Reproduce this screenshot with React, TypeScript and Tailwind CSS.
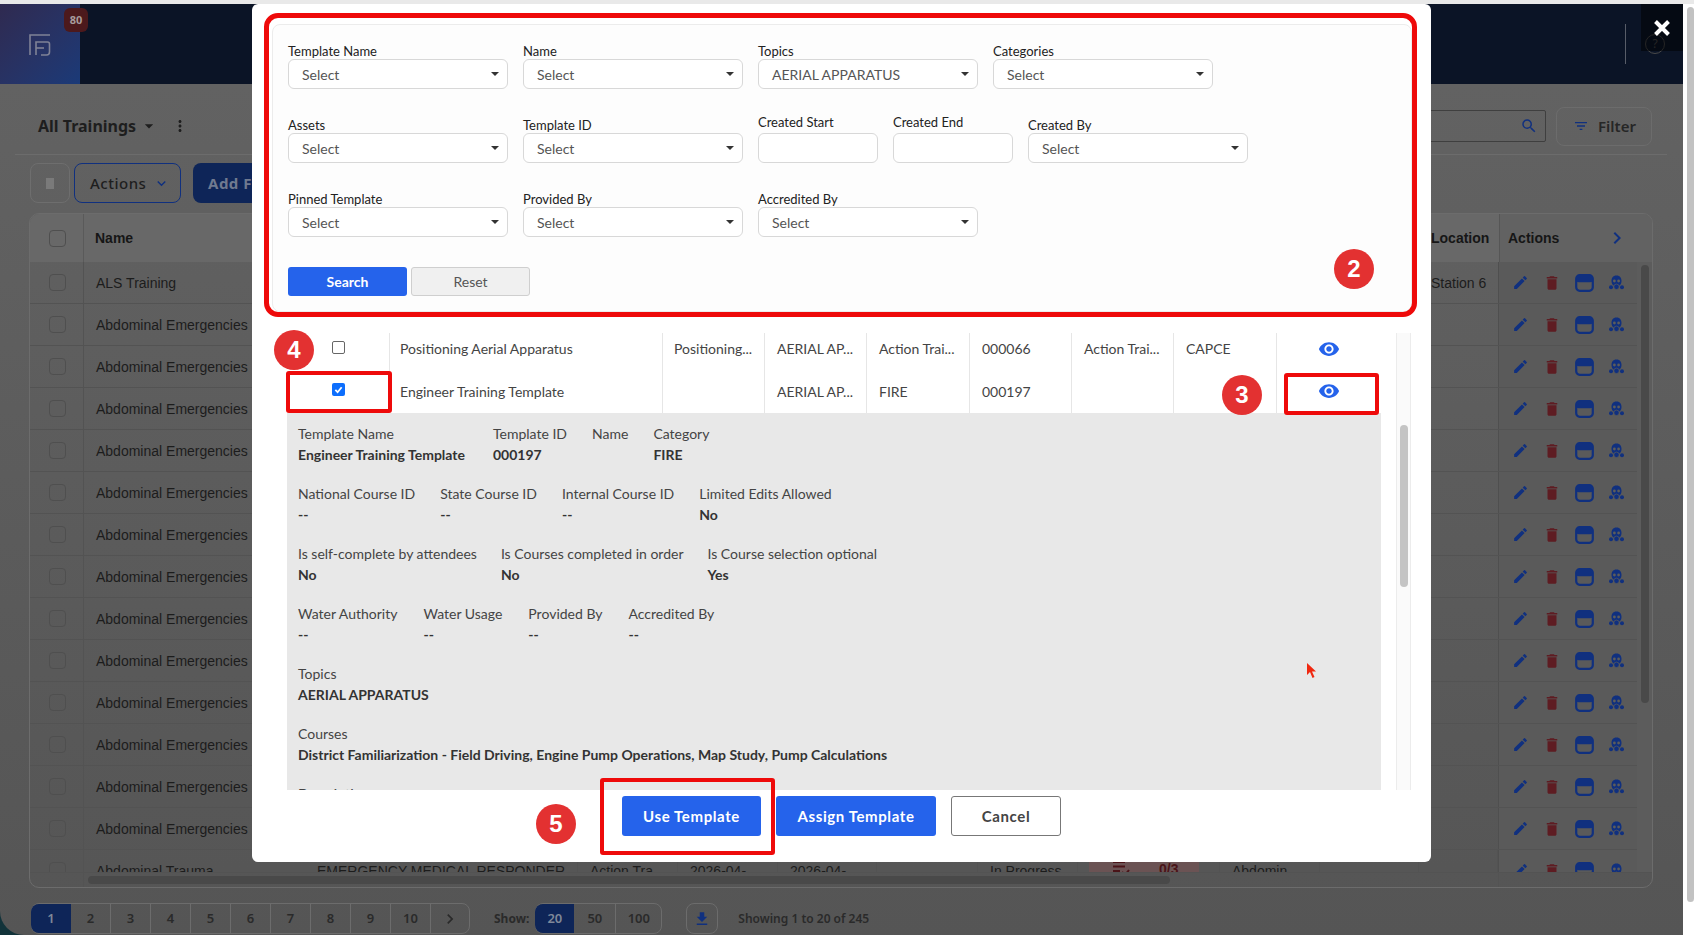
import React from "react";
import { MdVisibility, MdEdit, MdDelete, MdSearch, MdFilterList, MdDownload, MdArrowDropDown, MdMoreVert, MdKeyboardArrowDown, MdChevronRight } from "react-icons/md";

const bgCols = [221, 273, 100, 100, 99, 101, 100, 142, 100, 99, 79];

function WindowIcon() {
  return (
    <svg width="19" height="18" viewBox="0 0 19 18" className="shrink-0">
      <rect x="1.2" y="1.2" width="16.6" height="15.6" rx="3.5" fill="none" stroke="#10307f" strokeWidth="2.2" />
      <rect x="1.2" y="1.2" width="16.6" height="7" rx="2.5" fill="#10307f" />
    </svg>
  );
}

function MaskIcon() {
  return (
    <svg width="15" height="15" viewBox="0 0 15 15" className="shrink-0">
      <path d="M7.5 0.5C3.8 0.5 2.5 3 2.5 6c0 2 .8 3.6 2 4.6h6c1.2-1 2-2.6 2-4.6 0-3-1.3-5.5-5-5.5z" fill="#10307f" />
      <circle cx="5.4" cy="6" r="1.4" fill="#5c5c5c" />
      <circle cx="9.6" cy="6" r="1.4" fill="#5c5c5c" />
      <circle cx="2" cy="12.3" r="2" fill="#10307f" />
      <circle cx="13" cy="12.3" r="2" fill="#10307f" />
      <circle cx="7.5" cy="11.8" r="2.7" fill="#10307f" stroke="#5c5c5c" strokeWidth="0.7" />
    </svg>
  );
}

function BgCheck() {
  return <span className="w-[17px] h-[17px] ml-[1px] rounded-[4px] border border-[#4f4f4f] block" />;
}

function BgRow({ name, location, trauma }: { name: string; location?: string; trauma?: boolean }) {
  return (
    <div className="flex h-[42px] shrink-0 border-b border-[#535353] font-['Liberation_Sans',sans-serif] text-[14px] text-[#1c1c1c]">
      <div className="w-[54px] shrink-0 flex items-center justify-center border-r border-[#535353]">
        <BgCheck />
      </div>
      {bgCols.map((w, i) => {
        let text = "";
        if (i === 0) text = name;
        if (trauma) {
          text = ["Abdominal Trauma", "EMERGENCY MEDICAL RESPONDER", "Action Tra", "2026-04-", "2026-04-", "", "In Progress", "", "Abdomin", "", ""][i];
        }
        if (i === 10 && location) text = location;
        return (
          <div key={i} style={{ width: w }} className={"shrink-0 flex items-center pt-[1px] px-[12px] overflow-hidden whitespace-nowrap " + (trauma && i > 0 ? "border-r border-[#535353]" : "")}>
            {trauma && i === 7 ? (
              <div className="w-[110px] h-full ml-[-1px] bg-[#6b5354] flex items-start pt-[8px] pl-[23px] gap-[29px] text-[#4a1418] font-bold">
                <svg width="18" height="18" viewBox="0 0 18 18" fill="none" stroke="#4a1418" strokeWidth="2" className="shrink-0">
                  <path d="M1 3h12M1 7.5h12M1 12h7M10 13l3 3 4-5" />
                </svg>
                <span className="leading-[20px]">0/3</span>
              </div>
            ) : (
              text
            )}
          </div>
        );
      })}
      <div className="w-[140px] shrink-0 flex items-center pl-[13px] bg-[#5a5a5a] border-l border-[#4f4f4f] text-[#10307f]">
        <MdEdit size={17} className="shrink-0" />
        <MdDelete size={18} className="shrink-0 ml-[14px] text-[#5e1c22]" />
        <span className="ml-[14px]"><WindowIcon /></span>
        <span className="ml-[15px]"><MaskIcon /></span>
      </div>
    </div>
  );
}

function Background() {
  const pages = ["1", "2", "3", "4", "5", "6", "7", "8", "9", "10"];
  return (
    <div className="h-[935px] flex flex-col bg-[#e8e8e8]">
      <div className="h-[4px] shrink-0 bg-[#e9e9e9]" />
      <div className="flex flex-1 min-h-0">
        <div className="w-[1683px] flex flex-col bg-[#12333a]">
          <header className="h-[80px] shrink-0 bg-[#0b1426] flex">
            <div className="w-[80px] bg-gradient-to-br from-[#2f2a50] to-[#1a3a78] flex items-center justify-center relative">
              <svg width="22" height="22" viewBox="0 0 22 22" fill="none" stroke="#7f8296" strokeWidth="1.6" className="mt-[1px] mr-[1px]">
                <path d="M21 1H1V21" />
                <path d="M7 21V8H18.5a2 2 0 0 1 2 2V18a3 3 0 0 1-3 3H12" />
                <path d="M7 14H15" />
              </svg>
              <span className="absolute left-[64px] top-[4px] w-[24px] h-[24px] rounded-[6px] bg-[#4c191c] flex items-center justify-center text-[11px] font-bold text-[#a89c9c] font-['Noto_Sans',sans-serif]">80</span>
            </div>
            <div className="flex-1" />
            <div className="w-[1px] h-[40px] mt-[20px] bg-[#585d68]" />
            <div className="w-[57px] flex justify-center pt-[30px] pl-[1px]">
              <span className="w-[20px] h-[20px] rounded-full border border-[#4a4a4a] flex items-center justify-center text-[12px] text-[#4a4a4a] font-['Noto_Sans',sans-serif]">?</span>
            </div>
          </header>
          <main className="flex-1 min-h-0 rounded-bl-[24px] bg-gradient-to-b from-[#626262] to-[#555555] flex flex-col overflow-hidden pl-[15px] pr-[16px] font-['Noto_Sans',sans-serif]">
            <div className="h-[71px] shrink-0 border-b border-[#6c6c6c] flex items-center">
              <span className="ml-[23px] mt-[13px] text-[16px] font-bold text-[#1e1e1e]">All Trainings</span>
              <MdArrowDropDown size={20} className="ml-[3px] mt-[13px] text-[#1e1e1e]" />
              <MdMoreVert size={18} className="ml-[12px] mt-[13px] text-[#1e1e1e]" />
              <div className="flex-1" />
              <div className="w-[500px] h-[32px] mt-[14px] mr-[10px] border border-[#3f3f3f] rounded-[2px] flex items-center justify-end pr-[7px]">
                <MdSearch size={18} className="text-[#10307f]" />
              </div>
              <div className="w-[96px] h-[39px] mr-[15px] mt-[14px] border border-[#6c6c6c] rounded-[8px] flex items-center pl-[16px] gap-[9px] text-[15px] font-semibold text-[#262626]">
                <MdFilterList size={16} className="text-[#10307f]" />
                Filter
              </div>
            </div>
            <div className="flex shrink-0 mt-[8px] ml-[15px] h-[40px] items-center">
              <div className="w-[40px] h-[40px] rounded-[8px] border border-[#6e6e6e] flex items-center justify-center">
                <div className="w-[8px] h-[11px] bg-[#7a7a7a]" />
              </div>
              <div className="w-[107px] h-[40px] ml-[4px] rounded-[8px] border border-[#10307f] flex items-center pl-[15px] gap-[7px] text-[15px] font-medium tracking-[0.5px] text-[#1e1e1e]">
                Actions
                <MdKeyboardArrowDown size={17} className="text-[#10307f]" />
              </div>
              <div className="w-[120px] h-[40px] ml-[12px] rounded-[8px] bg-[#0e2558] flex items-center pl-[15px] text-[15px] font-bold tracking-[0.5px] text-[#707a90]">Add F</div>
            </div>
            <div className="ml-[14px] mt-[10px] w-[1624px] h-[675px] shrink-0 border border-[#6c6c6c] rounded-[10px] flex flex-col overflow-hidden">
              <div className="flex h-[48px] shrink-0 bg-[#686868] font-['Liberation_Sans',sans-serif] font-bold text-[14px] text-[#161616]">
                <div className="w-[54px] flex items-center justify-center border-r border-[#5a5a5a]"><BgCheck /></div>
                <div className="w-[1336px] pl-[11px] flex items-center">Name</div>
                <div className="w-[79px] pl-[11px] flex items-center">Location</div>
                <div className="flex-1 flex items-center pl-[8px] bg-[#626262] border-l border-[#565656]">
                  Actions
                  <MdChevronRight size={24} className="ml-[46px] text-[#10307f]" />
                </div>
              </div>
              <div className="flex flex-1 min-h-0">
                <div className="w-[1608px] flex flex-col overflow-hidden">
                  <BgRow name="ALS Training" location="Station 6" />
                  {Array.from({ length: 13 }).map((_, i) => (
                    <BgRow key={i} name="Abdominal Emergencies" />
                  ))}
                  <BgRow name="Abdominal Trauma" trauma />
                </div>
                <div className="flex-1 bg-[#5c5c5c] pt-[3px] pl-[4px] pr-[3px]">
                  <div className="w-[8px] h-[438px] rounded-full bg-[#494949]" />
                </div>
              </div>
              <div className="h-[15px] shrink-0 flex border-t border-[#535353]">
                <div className="w-[54px] border-r border-[#535353]" />
                <div className="w-[1414px] pt-[3px]">
                  <div className="ml-[4px] w-[1082px] h-[8px] rounded-full bg-[#494949]" />
                </div>
                <div className="flex-1 border-l border-[#535353]" />
              </div>
            </div>
            <div className="flex mt-[15px] ml-[16px] h-[31px] items-center text-[13px] font-semibold text-[#2a2a2a]">
              <div className="flex h-full rounded-[8px] border border-[#6c6c6c]">
                {pages.map((p, i) => (
                  <span key={p} className={i === 0 ? "w-[40px] -ml-[1px] rounded-l-[8px] bg-[#0e2558] text-[#7f8899] flex items-center justify-center" : "w-[40px] border-r border-[#6c6c6c] flex items-center justify-center"}>{p}</span>
                ))}
                <span className="w-[38px] flex items-center justify-center"><MdChevronRight size={20} /></span>
              </div>
              <span className="ml-[24px] text-[12px] font-bold">Show:</span>
              <div className="flex h-full ml-[6px] rounded-[8px] border border-[#6c6c6c]">
                <span className="w-[39px] rounded-l-[8px] -ml-[1px] bg-[#0e2558] text-[#7f8899] flex items-center justify-center">20</span>
                <span className="w-[42px] border-r border-[#6c6c6c] flex items-center justify-center">50</span>
                <span className="w-[45px] flex items-center justify-center">100</span>
              </div>
              <div className="w-[32px] h-full ml-[24px] rounded-[8px] border border-[#6c6c6c] flex items-center justify-center">
                <MdDownload size={18} className="text-[#10307f]" />
              </div>
              <span className="ml-[20px] text-[12px]">Showing 1 to 20 of 245</span>
            </div>
          </main>
        </div>
        <div className="flex-1 bg-white pl-[4px] pt-[3px]">
          <div className="w-[7px] h-[895px] rounded-full bg-[#c2c2c2]" />
        </div>
      </div>
    </div>
  );
}

function Label({ children, up }: { children: React.ReactNode; up?: boolean }) {
  return <div className={up ? "h-[17px] mb-[3px] text-[13px] leading-[18px] text-[#222]" : "h-[17px] text-[13px] leading-[18px] text-[#222]"}>{children}</div>;
}

function SelectBox({ label, value = "Select", up }: { label: string; value?: string; up?: boolean }) {
  return (
    <div className="shrink-0">
      <Label up={up}>{label}</Label>
      <div className="w-[220px] h-[30px] rounded-[6px] border border-[#d8d8d8] bg-white flex items-center justify-between pl-[13px] pr-[8px] text-[14px] text-[#555]">
        {value}
        <span className="w-0 h-0 border-l-[4px] border-r-[4px] border-t-[4.5px] border-l-transparent border-r-transparent border-t-[#333]" />
      </div>
    </div>
  );
}

function DateBox({ label }: { label: string }) {
  return (
    <div className="shrink-0">
      <Label up>{label}</Label>
      <div className="w-[120px] h-[30px] rounded-[6px] border border-[#d8d8d8] bg-white" />
    </div>
  );
}

function Detail({ label, value, wide }: { label: string; value: string; wide?: boolean }) {
  return (
    <div className={wide ? "shrink-0 w-[170px]" : "shrink-0"}>
      <div className="h-[21px] leading-[21px] text-[14px] text-[#444]">{label}</div>
      <div className="h-[21px] leading-[21px] text-[14px] font-bold text-[#333] whitespace-nowrap">{value}</div>
    </div>
  );
}

function DetailRow({ items, gap = "gap-[25px]", wideFirst }: { items: [string, string][]; gap?: string; wideFirst?: boolean }) {
  return (
    <div className={"flex h-[60px] shrink-0 " + gap}>
      {items.map(([l, v], i) => <Detail key={l} label={l} value={v} wide={wideFirst && i === 0} />)}
    </div>
  );
}

function TRow({ cells, checked, clip }: { cells: string[]; checked?: boolean; clip?: boolean }) {
  const widths = [273, 102, 102, 103, 102, 102, 103, 104];
  return (
    <div className={clip ? "flex h-[38px] shrink-0 text-[14px] text-[#444]" : "flex h-[42px] shrink-0 text-[14px] text-[#444]"}>
      <div className="w-[103px] shrink-0 border-r border-[#e6e6e6] flex justify-center pt-[2px] pl-[1px]">
        {checked ? (
          <span className="w-[13px] h-[13px] mt-[10px] rounded-[2px] bg-[#0d6efd] flex items-center justify-center">
            <svg width="9" height="9" viewBox="0 0 10 10" fill="none" stroke="#fff" strokeWidth="2"><path d="M1.5 5.5 4 8 8.5 2.5" /></svg>
          </span>
        ) : (
          <span className="w-[13px] h-[13px] mt-[6px] rounded-[2px] border border-[#666] bg-white" />
        )}
      </div>
      {cells.map((c, i) => (
        <div key={i} style={{ width: widths[i] }} className={"shrink-0 flex items-center whitespace-nowrap overflow-hidden " + (i === 0 ? "pl-[10px] pr-[10px] " : i === 7 ? "pl-[10px] pr-[10px] " : i === 1 ? "pl-[11px] pr-[8px] " : "pl-[12px] pr-[8px] ") + (i < 7 ? "border-r border-[#e6e6e6] " : "") + (clip ? "pb-[7px]" : "pb-[2px]")}>
          {i === 7 ? <MdVisibility size={22} className="mx-auto text-[#2563eb]" /> : c}
        </div>
      ))}
    </div>
  );
}

function Modal() {
  return (
    <div className="absolute left-[252px] top-[4px] w-[1179px] h-[858px] rounded-[6px] bg-white flex flex-col font-['Lato',sans-serif]">
      <div className="mt-[20px] ml-[20px] mr-[19px] h-[288px] shrink-0 rounded-[8px] border border-[#ececec] bg-[#fdfdfd] pl-[15px] pt-[17px] flex flex-col">
        <div className="flex gap-[15px] items-end">
          <SelectBox label="Template Name" />
          <SelectBox label="Name" />
          <SelectBox label="Topics" value="AERIAL APPARATUS" />
          <SelectBox label="Categories" />
        </div>
        <div className="flex gap-[15px] items-end mt-[24px]">
          <SelectBox label="Assets" />
          <SelectBox label="Template ID" />
          <DateBox label="Created Start" />
          <DateBox label="Created End" />
          <SelectBox label="Created By" />
        </div>
        <div className="flex gap-[15px] items-end mt-[27px]">
          <SelectBox label="Pinned Template" />
          <SelectBox label="Provided By" />
          <SelectBox label="Accredited By" />
        </div>
        <div className="flex gap-[4px] mt-[30px]">
          <button className="w-[119px] h-[29px] rounded-[3px] bg-[#2563eb] text-white text-[14px] font-bold">Search</button>
          <button className="w-[119px] h-[29px] rounded-[3px] bg-[#f0f0f0] border border-[#cfcfcf] text-[#555] text-[14px]">Reset</button>
        </div>
      </div>
      <div className="mt-[21px] ml-[35px] h-[457px] shrink-0 flex overflow-hidden">
        <div className="w-[1094px] flex flex-col">
          <TRow clip cells={["Positioning Aerial Apparatus", "Positioning...", "AERIAL AP...", "Action Trai...", "000066", "Action Trai...", "CAPCE", ""]} />
          <TRow checked cells={["Engineer Training Template", "", "AERIAL AP...", "FIRE", "000197", "", "", ""]} />
          <div className="flex-1 min-h-0 bg-[#e8e8e8] pl-[11px] pt-[10px] overflow-hidden flex flex-col">
            <DetailRow wideFirst items={[["Template Name", "Engineer Training Template"], ["Template ID", "000197"], ["Name", ""], ["Category", "FIRE"]]} />
            <DetailRow items={[["National Course ID", "--"], ["State Course ID", "--"], ["Internal Course ID", "--"], ["Limited Edits Allowed", "No"]]} />
            <DetailRow gap="gap-[24px]" items={[["Is self-complete by attendees", "No"], ["Is Courses completed in order", "No"], ["Is Course selection optional", "Yes"]]} />
            <DetailRow gap="gap-[26px]" items={[["Water Authority", "--"], ["Water Usage", "--"], ["Provided By", "--"], ["Accredited By", "--"]]} />
            <DetailRow items={[["Topics", "AERIAL APPARATUS"]]} />
            <DetailRow items={[["Courses", "District Familiarization - Field Driving, Engine Pump Operations, Map Study, Pump Calculations"]]} />
            <DetailRow items={[["Description", ""]]} />
          </div>
        </div>
        <div className="ml-[15px] w-[15px] bg-[#fafafa] border-x border-[#ececec] pt-[92px] px-[3px]">
          <div className="w-[8px] h-[162px] rounded-full bg-[#c4c4c4]" />
        </div>
      </div>
      <div className="flex justify-center gap-[15px] pt-[6px]">
        <button className="w-[139px] h-[40px] rounded-[3px] bg-[#2563eb] text-white text-[15px] font-bold tracking-[0.6px]">Use Template</button>
        <button className="w-[160px] h-[40px] rounded-[3px] bg-[#2563eb] text-white text-[15px] font-bold tracking-[0.6px]">Assign Template</button>
        <button className="w-[110px] h-[40px] rounded-[3px] bg-white border border-[#777] text-[#444] text-[15px] font-bold tracking-[0.6px]">Cancel</button>
      </div>
    </div>
  );
}

function Badge({ n, pos }: { n: string; pos: string }) {
  return (
    <div className={"absolute w-[40px] h-[40px] rounded-full bg-[#e33131] text-white text-[24px] font-bold flex items-center justify-center font-['Liberation_Sans',sans-serif] " + pos}>{n}</div>
  );
}

export default function App() {
  return (
    <div className="relative w-[1694px] h-[935px] overflow-hidden">
      <Background />
      <div className="absolute left-[1641px] top-[4px] w-[42px] h-[47px] bg-[#000000]/50 flex items-start justify-center pt-[16px]">
        <svg width="16" height="16" viewBox="0 0 16 16" stroke="#fff" strokeWidth="4" fill="none">
          <path d="M1.5 1.5 14.5 14.5M14.5 1.5 1.5 14.5" />
        </svg>
      </div>
      <Modal />
      {/* numbered annotations drawn over the screenshot */}
      <div className="absolute left-[264px] top-[13px] w-[1153px] h-[304px] rounded-[14px] border-[5px] border-[#ee0a0a]" />
      <div className="absolute left-[1284px] top-[373px] w-[95px] h-[42px] rounded-[3px] border-[4px] border-[#ee0a0a]" />
      <div className="absolute left-[286px] top-[371px] w-[106px] h-[42px] rounded-[3px] border-[4px] border-[#ee0a0a]" />
      <div className="absolute left-[600px] top-[778px] w-[175px] h-[77px] rounded-[3px] border-[4px] border-[#ee0a0a]" />
      <Badge n="2" pos="left-[1334px] top-[249px]" />
      <Badge n="3" pos="left-[1222px] top-[375px]" />
      <Badge n="4" pos="left-[274px] top-[330px]" />
      <Badge n="5" pos="left-[536px] top-[804px]" />
      <svg width="11" height="17" viewBox="0 0 11 17" className="absolute left-[1306px] top-[662px]">
        <path d="M1 1v12l3-3 2.5 6 2-1L6 9.5h4z" fill="#f02810" />
      </svg>
    </div>
  );
}
